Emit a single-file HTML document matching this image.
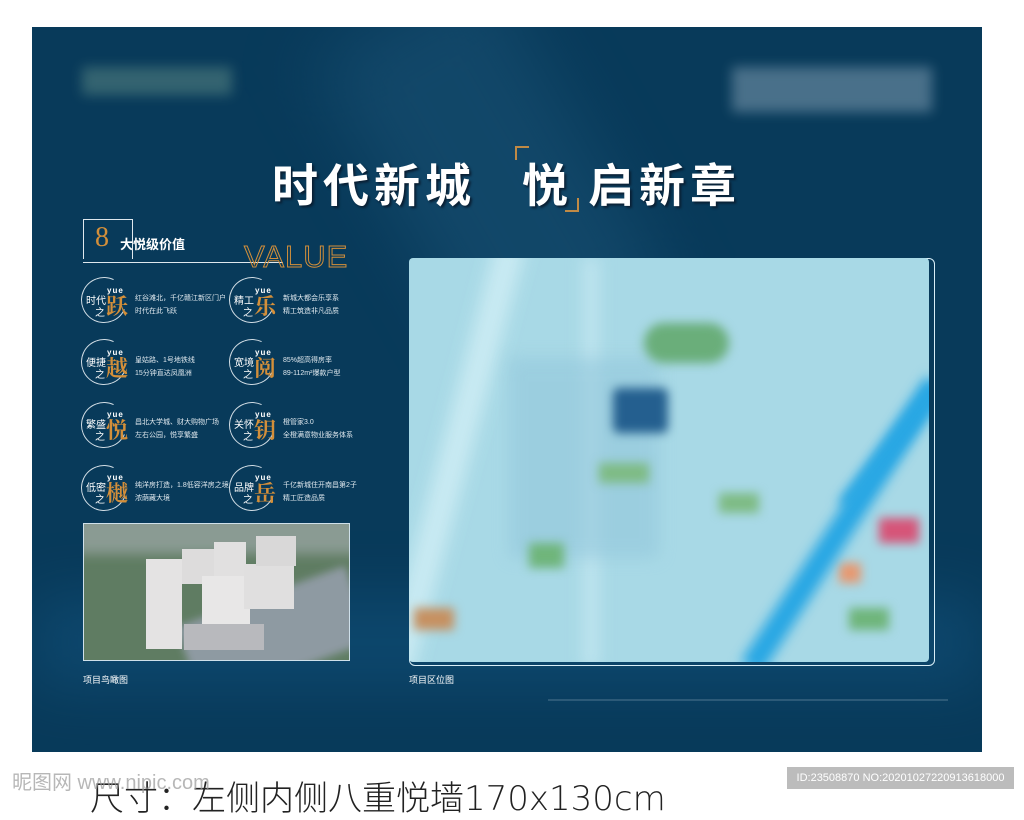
<!DOCTYPE html>
<html><head><meta charset="utf-8"><style>
*{margin:0;padding:0;box-sizing:border-box}
body{width:1024px;height:798px;background:#fff;position:relative;overflow:hidden;font-family:"Liberation Sans","Noto Sans CJK SC",sans-serif}
.abs{position:absolute}
#panel{left:32px;top:27px;width:950px;height:725px;background:#083a5a;overflow:hidden}
.blur{position:absolute;filter:blur(8px)}
.t{color:#dfe8ee;font-size:7px;line-height:13px;white-space:nowrap}
.ring{position:absolute;width:46px;height:46px;border-radius:50%;border:1.5px solid #cfdbe3;border-right-color:transparent;transform:rotate(-20deg)}
.lab{position:absolute;color:#fff;font-size:10px;line-height:12px}
.big{position:absolute;color:#d38f3a;font-size:22px;font-weight:bold;font-family:"Noto Serif CJK SC",serif}
.yue{position:absolute;color:#fff;font-size:8px;font-weight:bold;letter-spacing:1px}
.ttl{position:absolute;top:150px;color:#fff;font-size:46px;font-weight:bold;letter-spacing:5px;text-shadow:2px 2px 2px #0a1f33;white-space:nowrap}
</style></head><body>
<div id="panel" class="abs">
  <div class="blur" style="left:360px;top:-40px;width:200px;height:380px;background:#1a5275;transform:rotate(-30deg);filter:blur(35px);opacity:.55"></div>
  <div class="blur" style="left:0;top:570px;width:950px;height:90px;background:#11507a;filter:blur(30px);opacity:.6"></div>
  <div class="blur" style="left:50px;top:40px;width:150px;height:28px;background:#3f6e76;filter:blur(6px);opacity:.8"></div>
  <div class="blur" style="left:700px;top:40px;width:200px;height:45px;background:#5a7e96;filter:blur(6px);opacity:.8"></div>
</div>
<div class="ttl" style="left:272px">时代新城</div>
<div class="ttl" style="left:522px">悦</div>
<div class="ttl" style="left:588px">启新章</div>
<div class="abs" style="left:515px;top:146px;width:14px;height:14px;border-left:2px solid #c08a45;border-top:2px solid #c08a45"></div>
<div class="abs" style="left:565px;top:198px;width:14px;height:14px;border-right:2px solid #c08a45;border-bottom:2px solid #c08a45"></div>

<div class="abs" style="left:83px;top:219px;width:50px;height:40px;border:1px solid #dfe8ee;border-bottom:none"></div>
<div class="abs" style="left:83px;top:262px;width:200px;height:1px;background:#dfe8ee"></div>
<div class="abs" style="left:95px;top:222px;color:#d38f3a;font-size:28px;font-family:'Liberation Serif',serif">8</div>
<div class="abs" style="left:120px;top:234px;color:#fff;font-size:13px;font-weight:bold">大悦级价值</div>
<div class="abs" style="left:244px;top:239px;color:transparent;-webkit-text-stroke:1px #d38f3a;font-size:31px;letter-spacing:1px">VALUE</div>

<div class="ring" style="left:81px;top:277px"></div><div class="lab" style="left:86px;top:296px">时代</div><div class="lab" style="left:95px;top:308px">之</div><div class="big" style="left:106px;top:290px">跃</div><div class="yue" style="left:107px;top:286px">yue</div>
<div class="t abs" style="left:135px;top:292px">红谷滩北，千亿赣江新区门户<br>时代在此飞跃</div>
<div class="ring" style="left:229px;top:277px"></div><div class="lab" style="left:234px;top:296px">精工</div><div class="lab" style="left:243px;top:308px">之</div><div class="big" style="left:254px;top:290px">乐</div><div class="yue" style="left:255px;top:286px">yue</div>
<div class="t abs" style="left:283px;top:292px">新城大都会乐享系<br>精工筑造非凡品质</div>

<div class="ring" style="left:81px;top:339px"></div><div class="lab" style="left:86px;top:358px">便捷</div><div class="lab" style="left:95px;top:370px">之</div><div class="big" style="left:106px;top:352px">越</div><div class="yue" style="left:107px;top:348px">yue</div>
<div class="t abs" style="left:135px;top:354px">皇姑路、1号地铁线<br>15分钟直达凤凰洲</div>
<div class="ring" style="left:229px;top:339px"></div><div class="lab" style="left:234px;top:358px">宽境</div><div class="lab" style="left:243px;top:370px">之</div><div class="big" style="left:254px;top:352px">阅</div><div class="yue" style="left:255px;top:348px">yue</div>
<div class="t abs" style="left:283px;top:354px">85%超高得房率<br>89-112m²爆款户型</div>

<div class="ring" style="left:81px;top:402px"></div><div class="lab" style="left:86px;top:420px">繁盛</div><div class="lab" style="left:95px;top:432px">之</div><div class="big" style="left:106px;top:414px">悦</div><div class="yue" style="left:107px;top:410px">yue</div>
<div class="t abs" style="left:135px;top:416px">昌北大学城、财大购物广场<br>左右公园，悦享繁盛</div>
<div class="ring" style="left:229px;top:402px"></div><div class="lab" style="left:234px;top:420px">关怀</div><div class="lab" style="left:243px;top:432px">之</div><div class="big" style="left:254px;top:414px">钥</div><div class="yue" style="left:255px;top:410px">yue</div>
<div class="t abs" style="left:283px;top:416px">橙管家3.0<br>全橙满意物业服务体系</div>

<div class="ring" style="left:81px;top:465px"></div><div class="lab" style="left:86px;top:483px">低密</div><div class="lab" style="left:95px;top:495px">之</div><div class="big" style="left:106px;top:477px">樾</div><div class="yue" style="left:107px;top:473px">yue</div>
<div class="t abs" style="left:135px;top:479px">纯洋房打造，1.8低容洋房之境<br>浓荫藏大境</div>
<div class="ring" style="left:229px;top:465px"></div><div class="lab" style="left:234px;top:483px">品牌</div><div class="lab" style="left:243px;top:495px">之</div><div class="big" style="left:254px;top:477px">岳</div><div class="yue" style="left:255px;top:473px">yue</div>
<div class="t abs" style="left:283px;top:479px">千亿新城住开南昌第2子<br>精工匠造品质</div>

<div class="abs" style="left:83px;top:523px;width:267px;height:138px;border:1px solid #cfe0ea;background:#5f7c62;overflow:hidden">
  <div class="blur" style="left:-10px;top:-10px;width:290px;height:40px;background:#8a9b93;filter:blur(6px)"></div>
  <div class="blur" style="left:100px;top:70px;width:180px;height:80px;background:#8e9aa2;transform:rotate(-20deg);filter:blur(4px)"></div>
  <div class="abs" style="left:62px;top:35px;width:36px;height:90px;background:#e4e3e3"></div>
  <div class="abs" style="left:98px;top:25px;width:35px;height:35px;background:#dddcdc"></div>
  <div class="abs" style="left:130px;top:18px;width:32px;height:40px;background:#e1e0e0"></div>
  <div class="abs" style="left:118px;top:52px;width:48px;height:48px;background:#e8e7e7"></div>
  <div class="abs" style="left:160px;top:40px;width:50px;height:45px;background:#e0dfdf"></div>
  <div class="abs" style="left:172px;top:12px;width:40px;height:30px;background:#d9d8d8"></div>
  <div class="abs" style="left:100px;top:100px;width:80px;height:26px;background:#b8b9bd"></div>
</div>
<div class="abs" style="left:83px;top:673px;color:#fff;font-size:9px">项目鸟瞰图</div>
<div class="abs" style="left:409px;top:673px;color:#fff;font-size:9px">项目区位图</div>

<div class="abs" style="left:409px;top:258px;width:526px;height:408px;border:1px solid #d8eef7;border-radius:6px"></div>
<div class="abs" style="left:409px;top:258px;width:520px;height:404px;background:#a8d9e6;border-radius:4px;overflow:hidden">
  <div class="blur" style="left:30px;top:-20px;width:30px;height:440px;background:#c8eaf2;transform:rotate(15deg)"></div>
  <div class="blur" style="left:175px;top:0;width:14px;height:410px;background:#c2e6f0"></div>
  <div class="blur" style="left:100px;top:100px;width:150px;height:200px;background:#94c8dc;opacity:.6"></div>
  <div class="blur" style="left:235px;top:65px;width:85px;height:40px;background:#6aae7a;border-radius:20px;filter:blur(5px)"></div>
  <div class="blur" style="left:204px;top:130px;width:55px;height:45px;background:#245f8f;border-radius:6px;filter:blur(5px)"></div>
  <div class="blur" style="left:190px;top:205px;width:50px;height:20px;background:#7ebb84;filter:blur(5px)"></div>
  <div class="blur" style="left:310px;top:235px;width:40px;height:20px;background:#7ebb84;filter:blur(5px)"></div>
  <div class="blur" style="left:120px;top:285px;width:35px;height:25px;background:#6fb57a;filter:blur(5px)"></div>
  <div class="blur" style="left:440px;top:350px;width:40px;height:22px;background:#6fb57a;filter:blur(5px)"></div>
  <div class="blur" style="left:470px;top:260px;width:40px;height:25px;background:#d65478;filter:blur(5px)"></div>
  <div class="blur" style="left:430px;top:305px;width:22px;height:20px;background:#e79870;filter:blur(5px)"></div>
  <div class="blur" style="left:5px;top:350px;width:40px;height:22px;background:#c69060;filter:blur(5px)"></div>
  <div class="blur" style="left:515px;top:125px;width:24px;height:340px;background:#28a7e4;transform:rotate(33deg);transform-origin:top;filter:blur(6px)"></div>
  <div class="blur" style="left:520px;top:130px;width:16px;height:150px;background:#28a7e4;transform:rotate(38deg);transform-origin:top;filter:blur(6px)"></div>
</div>
<div class="abs" style="left:548px;top:699px;width:400px;height:2px;background:#6f8fa5;opacity:.35"></div>

<div class="abs" style="left:90px;top:771px;color:#222;font-size:34px;white-space:nowrap;font-family:'DejaVu Sans','Noto Sans CJK SC',sans-serif;font-weight:300">尺寸：左侧内侧八重悦墙170x130cm</div>
<div class="abs" style="left:12px;top:766px;color:#999;font-size:20px;opacity:.7">昵图网 www.nipic.com</div>
<div class="abs" style="left:787px;top:767px;width:227px;height:22px;background:#bcbcbc;color:#fff;font-size:11px;line-height:22px;text-align:center">ID:23508870 NO:20201027220913618000</div>
</body></html>
